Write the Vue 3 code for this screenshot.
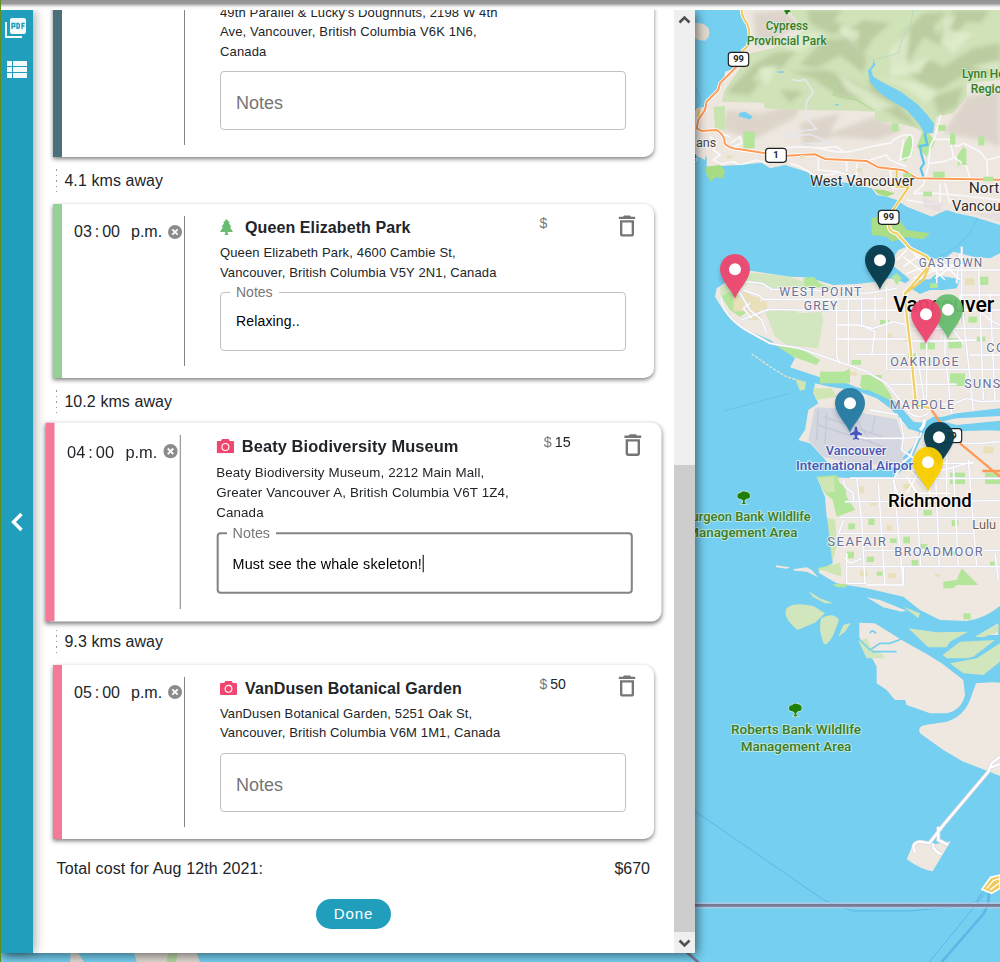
<script setup>
const stops = [
  { color: '#4a707a', time: '', icon: 'cup', title: "49th Parallel & Lucky's Doughnuts", lines: ["49th Parallel & Lucky's Doughnuts, 2198 W 4th", 'Ave, Vancouver, British Columbia V6K 1N6,', 'Canada'], cost: '', note: '', distance: '4.1 kms away' },
  { color: '#95d097', time: '03', icon: 'tree', title: 'Queen Elizabeth Park', lines: ['Queen Elizabeth Park, 4600 Cambie St,', 'Vancouver, British Columbia V5Y 2N1, Canada'], cost: '', note: 'Relaxing..', distance: '10.2 kms away' },
  { color: '#f57998', time: '04', icon: 'camera', title: 'Beaty Biodiversity Museum', lines: ['Beaty Biodiversity Museum, 2212 Main Mall,', 'Greater Vancouver A, British Columbia V6T 1Z4,', 'Canada'], cost: '15', note: 'Must see the whale skeleton!', active: true, distance: '9.3 kms away' },
  { color: '#f57998', time: '05', icon: 'camera', title: 'VanDusen Botanical Garden', lines: ['VanDusen Botanical Garden, 5251 Oak St,', 'Vancouver, British Columbia V6M 1M1, Canada'], cost: '50', note: '' },
]

// Map units are a third of a pixel, with x = 0 at 690px.
const pins = [
  { x: 90, y: 762, c: '#ef476f' },
  { x: 525, y: 735, c: '#073b4c' },
  { x: 729, y: 883, c: '#69bd70' },
  { x: 663, y: 897, c: '#ef476f' },
  { x: 435, y: 1164, c: '#267ba3' },
  { x: 702, y: 1266, c: '#073b4c' },
  { x: 669, y: 1341, c: '#fbd000' },
]
const labels = [
  { t: 'Cypress', x: 227, y: 90, w: 127, k: 'park' },
  { t: 'Provincial Park', x: 170, y: 135, w: 240, k: 'park' },
  { t: 'Lynn Headwaters', x: 816, y: 233, w: 275, k: 'park' },
  { t: 'Regional Park', x: 842, y: 278, w: 225, k: 'park' },
  { t: 'Sturgeon Bank Wildlife', x: -32, y: 1563, w: 394, k: 'park' },
  { t: 'Management Area', x: -8, y: 1612, w: 330, k: 'park' },
  { t: 'Roberts Bank Wildlife', x: 123, y: 2202, w: 390, k: 'park' },
  { t: 'Management Area', x: 152, y: 2253, w: 332, k: 'park' },
  { t: 'West Vancouver', x: 360, y: 558, w: 313, k: 'town' },
  { t: 'North', x: 836, y: 579, w: 118, k: 'town' },
  { t: 'Vancouver', x: 786, y: 634, w: 205, k: 'town' },
  { t: 'Vancouver', x: 610, y: 935, w: 303, k: 'city' },
  { t: 'Richmond', x: 594, y: 1520, w: 251, k: 'rich' },
  { t: 'Lulu Island', x: 847, y: 1586, w: 184, k: 'isle' },
  { t: 'ans', x: 18, y: 441, w: 61, k: 'small' },
  { t: 'e', x: 2, y: 482, w: 18, k: 'small' },
  { t: 'GASTOWN', x: 686, y: 801, w: 194, k: 'area' },
  { t: 'WEST POINT', x: 268, y: 887, w: 250, k: 'area' },
  { t: 'GREY', x: 341, y: 930, w: 105, k: 'area' },
  { t: 'OAKRIDGE', x: 601, y: 1098, w: 209, k: 'area' },
  { t: 'MARPOLE', x: 599, y: 1226, w: 197, k: 'area' },
  { t: 'SUNSET', x: 823, y: 1164, w: 164, k: 'area' },
  { t: 'COLLINGWOOD', x: 889, y: 1055, w: 310, k: 'area' },
  { t: 'SEAFAIR', x: 412, y: 1638, w: 180, k: 'area' },
  { t: 'BROADMOOR', x: 613, y: 1668, w: 269, k: 'area' },
  { t: 'Vancouver', x: 407, y: 1365, w: 182, k: 'air' },
  { t: 'International Airport', x: 318, y: 1409, w: 366, k: 'air' },
]
const shields = [
  { t: '99', x: 115, y: 157, w: 61 },
  { t: '1', x: 227, y: 445, w: 62 },
  { t: '99', x: 565, y: 631, w: 62 },
  { t: '99', x: 753, y: 1286, w: 62 },
]
const greens = [
  [390, 1115, 90, 35], [515, 1125, 60, 45], [780, 1120, 45, 38], [690, 1028, 45, 20], [775, 1015, 40, 30],
  [570, 960, 28, 14], [655, 1060, 30, 16], [485, 1080, 28, 14], [720, 850, 24, 14], [835, 950, 26, 18],
  [870, 830, 25, 25], [860, 1010, 26, 14], [780, 1418, 45, 34], [885, 1418, 48, 34], [475, 1570, 20, 18],
  [535, 1555, 18, 20], [640, 1610, 20, 20], [700, 1530, 26, 16], [785, 1560, 20, 18], [600, 1615, 20, 14],
  [770, 1650, 26, 14], [690, 1632, 22, 14], [470, 1655, 22, 20], [530, 1670, 22, 16], [665, 1680, 20, 18],
  [820, 1840, 22, 18], [900, 1685, 14, 12], [710, 1425, 20, 18], [560, 1715, 18, 12],
  [160, 395, 34, 50], [605, 370, 20, 24], [730, 515, 34, 18], [780, 400, 16, 34], [815, 455, 14, 40],
  [865, 410, 18, 26], [745, 375, 22, 18], [700, 575, 26, 14], [640, 520, 24, 12], [880, 530, 30, 14],
]
const tans = [
  [130, 890, 80, 44], [195, 905, 36, 24], [585, 1000, 22, 16], [735, 935, 30, 22], [805, 930, 20, 40],
  [505, 1460, 18, 18], [590, 1575, 16, 16], [595, 1720, 22, 14], [510, 1712, 22, 16], [640, 1452, 26, 14],
  [735, 1722, 16, 8], [480, 1115, 20, 12], [110, 465, 16, 10], [330, 465, 14, 10], [500, 505, 16, 10],
  [825, 835, 28, 20], [640, 1012, 20, 12], [880, 1340, 30, 20], [540, 1502, 22, 14],
]
</script>

<template>
  <div class="page">
    <svg class="map" viewBox="-2070 0 3000 2886">
      <defs>
        <filter id="soft" x="-20%" y="-20%" width="140%" height="140%"><feGaussianBlur stdDeviation="7" /></filter>
        <filter id="pinshade" x="-30%" y="-30%" width="160%" height="160%"><feGaussianBlur stdDeviation="7" /></filter>
        <clipPath id="hills"><path d="M155 30L170 75L182 110L178 140L150 162L140 205L105 270L95 305L220 308L225 325L330 330L500 332L555 335L555 362L625 370L680 385L700 400L728 400L740 350L790 340L830 290L830 250L930 240V30Z" /></clipPath>
        <clipPath id="northland"><path d="M155 30L170 75L182 110L178 140L150 162L135 205L105 215L100 250L65 290L45 320L20 325L0 360V400L50 470L50 500L150 495L215 488L240 505L285 495L350 515L400 545L470 548L545 565L560 585L590 590L620 600L650 620L700 640L725 650L770 630L800 640L850 650L930 675V30Z" /></clipPath>
        <g id="roads">
          <path d="M93 890Q95 940 160 985L240 1030L330 1045L445 1085L520 1110L590 1150L660 1240Q690 1260 715 1240M165 845L215 850L245 868L400 872L530 880L620 865M160 870L205 885L220 898L440 897L580 896M145 870L180 930L215 960L230 1000M155 960L230 930L240 928L440 932L645 930" />
          <path d="M180 910L160 925L185 955M440 880V1070L450 1090M475 900V1090M515 890V975L555 995L545 1065M555 890V960M590 860V1110M440 975H500L550 985L610 965L650 975M440 1017H650M500 1063H650M600 1108H930M600 1153H800M670 985H930M665 1023H760L860 1020M660 930H930M765 1000V1060L785 1240" />
          <path d="M710 1020V1210M680 1060L705 1210M815 740V930M818 930L850 1230M865 790L880 1200M900 880L915 1200M700 810H930M810 760L800 850M810 885H930M840 1065H930M810 885V970M870 935L900 960L930 975M735 1210L780 1215L830 1195L870 1205L930 1203M760 935L790 990L820 1030" />
          <path d="M500 1310L530 1315H640L690 1310L705 1260M540 1230L630 1245L640 1310L635 1350L680 1380L720 1395M685 1310L660 1370L640 1385L610 1440L625 1490M480 1435H930M465 1505H620L930 1502M450 1552H930M450 1600H850M520 1651H930M470 1700H930M530 1755H640V1700M470 1660V1750H530" />
          <path d="M460 1440L465 1460L490 1480L490 1505M500 1435L515 1560L525 1750M565 1450L575 1600L585 1755M612 1440L625 1600L640 1755M680 1500L692 1700M735 1380L748 1700M790 1400L805 1700M835 1380L860 1700M465 1675L480 1690L515 1675M445 1605L460 1560M915 1660L925 1740M670 1390H850M700 1330H870L930 1325M770 1340V1500M650 1410H760L850 1385" />
        </g>
      </defs>
      <rect x="-2070" width="3000" height="2886" fill="#75cff0" />

      <!-- shipping lanes -->
      <g fill="none" stroke="#5fb5e8" stroke-width="3">
        <path d="M15 2434L405 2702L490 2733H660L780 2722L860 2705L875 2680" />
        <path d="M718 2886L860 2712L885 2680M860 2705Q870 2680 885 2672" />
        <path d="M755 2886L880 2742Q897 2715 897 2680" stroke-width="8" />
        <path d="M105 1232L300 1180M750 770Q810 740 845 690L865 650M15 260L32 300L15 330" stroke="#62bde2" stroke-width="2" />
      </g>

      <!-- north shore -->
      <g clip-path="url(#northland)">
        <rect y="0" width="930" height="700" fill="#ede7df" />
        <g filter="url(#soft)" fill="#d9d0c5" opacity=".8">
          <path d="M190 40L280 30L330 75L270 110L200 140Z M110 330L210 340L330 310L320 350L190 420L100 390Z" />
          <path d="M330 370L450 340L420 400L550 350L640 390L560 420L430 410L340 440Z M830 290L930 270V440L870 420L760 400Z" />
        </g>
        <path d="M295 30H930V240L830 250V290L790 340L740 350L728 400L700 400L680 385L625 370L555 362V335L500 332L330 330L225 325L220 308L95 305L105 270L150 205L180 160L250 145L345 90Z" fill="#d0e2b8" />
        <g clip-path="url(#hills)">
          <g filter="url(#soft)" fill="#aebf92" opacity=".62">
            <path d="M350 30H455L430 65L465 75L430 105L360 70Z M470 95L520 60L600 70L545 120L520 165Z M400 120L470 115L530 175L520 220L450 165L380 205L330 195Z" />
            <path d="M250 160L320 150L275 205L215 200L180 250L120 265L190 195Z M300 215L410 210L500 250L590 300L650 350L540 300L450 290L370 235Z" />
            <path d="M530 235L570 255L640 330L690 385L620 355L560 310Z M640 100L700 40L770 35L730 80L760 140L700 110L660 180L600 200Z" />
            <path d="M790 30H900L870 70L830 65L780 125L740 115Z M650 215L720 180L760 200L850 145L930 130V220L820 225L750 270L690 245Z M730 290L820 260L800 320L745 345Z" />
            <path d="M110 280L150 235L210 245L180 285Z M270 270L340 275L300 310Z" />
          </g>
          <g filter="url(#soft)" fill="#e3efd0" opacity=".75">
            <path d="M330 95L400 100L330 155L280 145Z M450 75L510 95L500 125L455 105Z M600 150L660 85L650 200L720 165L690 220L600 230Z M760 60L800 40L780 90L850 100L790 160L755 130Z M560 230L640 260L710 310L740 280L680 250Z M840 200L930 180V220Z M205 210L260 195L230 260Z M440 220L530 270L620 320L560 330L470 270Z" />
          </g>
          <path d="M670 30L660 80L635 120L625 160L550 180L480 125L400 70L385 30" fill="none" stroke="#a9d3c5" stroke-width="3" stroke-dasharray="4 3" />
          <path d="M400 235L440 260L430 285L500 300L550 330" fill="none" stroke="#b4d797" stroke-width="4" />
        </g>
        <path d="M70 320L105 318V390H75Z" fill="#c9e4b0" />
        <path d="M635 480Q640 420 662 405Q675 420 668 460L645 485Z M700 390Q720 400 735 425L710 470L680 440Z M800 470L820 440L830 450L805 500Z" fill="#b3e59b" />
        <path d="M550 178L556 195L543 210L550 230L575 245L635 277L685 315L712 345L733 372L730 398L705 402L685 370L650 330L600 300L565 275L540 245L533 212L548 195Z" fill="#75cff0" />
        <path d="M704 400L712 435L690 438L694 462L702 490L692 505L700 530" fill="none" stroke="#60c4ed" stroke-width="7" />
        <path d="M150 340L165 337L185 350L180 356L148 347Z M262 216H282M435 314H446" fill="#75cff0" stroke="#75cff0" stroke-width="4" />
        <g fill="none" stroke="#f9f9fc" stroke-width="5">
          <path d="M308 238L325 243L345 238L370 275L350 305L345 350L380 387L320 395L280 403L290 410L360 403L430 432L350 430L310 445" stroke="#e6e6ee" />
          <path d="M230 465Q290 430 390 445Q450 465 500 450Q560 435 600 430Q630 400 665 405Q675 430 660 470L630 480L640 420M390 445L440 440L460 455M500 490V535M385 475V510L440 515L540 545M470 480V515M540 480L590 465L600 480L650 500" />
          <path d="M752 345L735 410L720 440L715 500L700 555L670 580M735 418H780L800 440L820 430M820 430L870 455L890 480L893 530M780 420L790 470L830 500L840 535M670 580H740L800 585L930 600M750 550V610L720 612L650 600M765 550L780 610M715 490L760 485L800 470M600 510L610 570" />
          <path d="M60 410L80 430L70 450L90 465L70 480L95 492L130 485L150 495L200 480L230 490M120 430L150 410L155 430L130 440M90 400L120 410M300 490L330 500L380 530L440 520M893 480L930 470M860 540L870 580" />
        </g>
        <path d="M700 595L760 610L750 635L700 620Z M850 640L930 665V640Z" fill="#e1d8df" opacity=".6" />
      </g>
      <path d="M15 70Q45 65 58 90Q62 110 45 122Q25 122 15 115Z" fill="#e0d9ce" />
      <path d="M48 500L90 495L105 512L100 535L75 532L62 545L48 520Z M550 568L580 570L615 580L590 590L565 582Z" fill="#a8dc84" />
      <path d="M15 390L40 392L50 450L45 480L15 465Z" fill="#ede7df" />

      <g fill="none">
        <path d="M155 30Q155 50 172 72Q185 105 172 140L155 155" stroke="#fff" stroke-width="11" />
        <path d="M155 30Q155 50 172 72Q185 105 172 140L155 155" stroke="#f0c85c" stroke-width="6" />
        <path d="M145 195L90 250L85 270L50 305L45 330L25 360L20 385L35 393L80 390Q105 405 104 430Q115 445 150 448L227 460M290 467L375 463L405 477L530 483L565 502L640 511L680 535L930 539" stroke="#fff" stroke-width="11" />
        <path d="M145 195L90 250L85 270L50 305L45 330L25 360L20 385L35 393L80 390Q105 405 104 430Q115 445 150 448L227 460M290 467L375 463L405 477L530 483L565 502L640 511L680 535L930 539" stroke="#ff9a56" stroke-width="6" />
        <path d="M620 510V560H657L608 632" stroke="#fff" stroke-width="11" />
        <path d="M620 510V560H657L608 632M28 325L24 350" stroke="#f0cc62" stroke-width="7" />
      </g>

      <!-- Vancouver -->
      <path d="M80 865L120 840L180 812L300 830L345 832L380 840L430 855L500 852L560 845L600 835L625 840L645 850L660 840L650 830L600 790L625 750L650 740L700 770L760 780L790 755L850 770L900 775L930 760V1232L850 1240L780 1252L730 1250L700 1268L670 1265L640 1230L600 1190L560 1175L500 1162L470 1150L390 1132L300 1102L315 1075L300 1060L240 1020L150 980L100 930L75 890Z" fill="#efe8e0" />
      <path d="M545 655L600 640L625 655L650 690L720 700L700 718L650 712L605 725L590 710L545 705Z" fill="#abdd86" />
      <path d="M90 862L125 845L190 818L300 830L340 845L375 848L385 862L300 870L250 865L180 850L120 875L95 900Z M225 935L290 925L330 940L395 935L400 960L385 1045L290 1035L255 1010Z" fill="#d2e7c0" />
      <path d="M95 890L115 875L140 880L180 930L150 950L120 930Z M340 835L370 830L390 850L425 865L345 860Z M245 1028L300 1040L340 1050L390 1080L380 1095L310 1070ZM400 1115L445 1125L480 1105L475 1150L395 1135Z M515 1125L560 1125L600 1180L610 1205L510 1158Z M605 830L620 820L635 835L620 855Z" fill="#b3e59b" />
      <path d="M160 870L205 900L215 960L180 960L150 900Z" fill="#e9deb8" />
      <path d="M655 860L680 840L720 838L735 825L810 838L800 865L760 870L720 870L690 882Z" fill="#75cff0" />

      <!-- Sea Island and Richmond -->
      <path d="M375 1150L420 1160L500 1172L560 1195L600 1225L640 1265L690 1288L685 1310L665 1345L640 1370L630 1400L500 1412L420 1395L360 1330L325 1320L345 1290L355 1230L385 1210L370 1180Z" fill="#efe8e0" />
      <path d="M375 1222L440 1225L520 1240L620 1258L640 1320L640 1390L500 1395L400 1370L355 1320Z" fill="#d4d6e0" />
      <g fill="none" stroke="#c5c8d6" stroke-width="4"><path d="M385 1230L380 1320M400 1250L575 1310M385 1275L580 1340M410 1240L405 1330M500 1260L545 1330M555 1250L545 1300" /></g>
      <path d="M750 1262L800 1255L930 1248V1262L800 1275Z M700 1300L740 1270L800 1285L930 1292V1818Q880 1858 830 1863L750 1860L690 1830L640 1790L530 1765L470 1755L440 1750L380 1715L428 1690L425 1610L410 1550L405 1490L380 1430L500 1435L610 1435L660 1390Z" fill="#efe8e0" />
      <path d="M380 1430L440 1425L450 1450L465 1460L470 1490L495 1530L440 1550L428 1500L405 1480Z M412 1555L435 1560L440 1640L425 1680Z M380 1705L450 1690L453 1728Z M428 1752H470V1762H440Z M760 1745L800 1740L815 1705L865 1755L800 1755L790 1765H760Z M900 1430H930V1452H885Z" fill="#b3e59b" />
      <path d="M382 1435L432 1430L435 1475L408 1478Z M412 1555L435 1558L440 1640L428 1680Z M380 1708L450 1690L453 1725Z M316 1137L348 1145L345 1168L330 1172Z M370 1165H425L440 1190L378 1200Z" fill="#cfe6b4" />
      <path d="M185 1062L240 1100L285 1128L320 1140" fill="none" stroke="#e3e4d0" stroke-width="4" stroke-dasharray="9 4" />
      <g fill="#b3e59b"><rect v-for="(g, i) in greens" :key="'g' + i" :x="g[0]" :y="g[1]" :width="g[2]" :height="g[3]" /></g>
      <g fill="#e9dfb9"><rect v-for="(g, i) in tans" :key="'t' + i" :x="g[0]" :y="g[1]" :width="g[2]" :height="g[3]" /></g>
      <path d="M720 990L750 985V1020L715 1020Z" fill="#f0d8dd" />

      <use href="#roads" fill="none" stroke="#dedfec" stroke-width="7.5" />
      <use href="#roads" fill="none" stroke="#fff" stroke-width="4" />
      <g fill="none" stroke="#fff" stroke-width="4"><path d="M620 780L650 750M640 800L690 765M650 820L735 790M670 835L770 800M640 770L710 825M670 760L740 815M725 800L765 840M750 780L810 840M735 835L800 790M760 795H820M740 790V850M660 1410L720 1480M650 1430L700 1510M720 1410V1500M670 1480H780M690 1410L650 1480" /></g>

      <path d="M600 1212L640 1232Q680 1285 720 1280L750 1265L800 1280L930 1278V1290L800 1294L745 1278L700 1300L655 1286Z M740 1255L800 1240L930 1225V1242L800 1253L740 1270Z" fill="#75cff0" />
      <path d="M690 1290Q702 1280 704 1260" fill="none" stroke="#fff" stroke-width="9" />
      <g fill="none">
        <path d="M597 675Q595 695 620 700L660 745L710 770L725 788L685 835L645 880L648 930L662 1050L678 1215L725 1225" stroke="#fff" stroke-width="13" />
        <path d="M597 675Q595 695 620 700L660 745L710 770L725 788L685 835L645 880L648 930L662 1050L678 1215L725 1225M725 780L700 840L645 880" stroke="#f1cf64" stroke-width="7" />
        <path d="M725 1230L745 1260L755 1270M810 1330L930 1430M877 1413H930" stroke="#ff9a56" stroke-width="7" />
      </g>

      <!-- Fraser delta -->
      <path d="M508 1868L555 1870L635 1920L715 1965L755 1990L820 2040L825 2085Q815 2130 770 2140H720L650 2115L645 2100L615 2100L590 2070L560 2050L560 2000L548 1978L520 1940L508 1910Z M258 1696L300 1702L290 1706L258 1702Z M308 1708L350 1702L365 1710L385 1732L350 1715L315 1712Z M530 1792L570 1800L650 1832L635 1835L580 1822Z M858 2050L930 2045V2328L885 2310L820 2285L760 2250L690 2200Q680 2178 710 2174L770 2165Q820 2150 840 2100Z M855 1910L925 1870V1905H880Z" fill="#efe8e0" />
      <path d="M290 1825Q310 1805 370 1818L405 1840L375 1868L322 1890Q275 1850 290 1825Z M393 1855Q430 1835 447 1860L430 1905Q405 1950 398 1922Q385 1890 393 1855Z M445 1910L460 1875L482 1869L465 1895Z M355 1773L390 1795L430 1810L405 1810L370 1792Z M655 1885L740 1897L835 1895L780 1925L770 1942H715Z M758 1965L810 1925L915 1920L850 1970L830 1975H770Z M780 1990L860 1975L930 1930V1985L880 2025L820 2020Z M855 1910L925 1872V1895L880 1912Z M505 1922L530 1915L545 1945L560 1955L580 1965L585 1975H530Z M640 1820L690 1840L685 1855Z" fill="#d1e6bd" />
      <path d="M510 1920L540 1950L570 1930H600L640 1915M540 1900Q545 1885 558 1900M545 1955L620 1955M380 1700L385 1720L430 1750" fill="none" stroke="#75cff0" stroke-width="5" />
      <path d="M620 1820L638 1800V1820Z" fill="#75cff0" />
      <path d="M848 2035L930 2042" fill="none" stroke="#75cff0" stroke-width="12" />
      <path d="M650 2578L672 2525L720 2535L782 2524L728 2614Q695 2610 650 2578Z" fill="#efe8e0" />
      <g fill="none">
        <path d="M930 2270L905 2290L895 2315L760 2475L718 2530L690 2525Q660 2530 676 2558M745 2480L745 2520L775 2535M895 2305L930 2292M728 2530Q730 2555 755 2562" stroke="#ddd8e2" stroke-width="12" />
        <path d="M930 2270L905 2290L895 2315L760 2475L718 2530L690 2525Q660 2530 676 2558M745 2480L745 2520L775 2535M895 2305L930 2292M728 2530Q730 2555 755 2562" stroke="#fff" stroke-width="7" />
        <path d="M15 2716H930" stroke="#b9c9e5" stroke-width="20" opacity=".65" />
        <path d="M15 2716H930M-20 2848L40 2900" stroke="#7b7991" stroke-width="8" />
      </g>
      <path d="M876 2668L902 2632L930 2625V2665L905 2680Z" fill="#eec95b" stroke="#fff" stroke-width="5" />
      <path d="M890 2666L910 2642L928 2636M900 2670L928 2648" fill="none" stroke="#fff" stroke-width="4" />
      <path d="M-1857 2850L-1860 2886H-1818L-1835 2860Z M-1670 2850L-1660 2886H-1470L-1485 2845Z" fill="#ded8d0" />
      <path d="M-1560 2850H-1535L-1542 2886H-1572Z" fill="#b5d7a0" />

      <!-- park and airport symbols -->
      <g fill="#1f8008" stroke="#c6e8dc" stroke-width="4" paint-order="stroke">
        <path id="oak" d="M154 1512L159 1508V1501L151 1496Q142 1498 142 1488Q142 1479 151 1479Q157 1471 167 1475Q180 1476 180 1488Q180 1497 170 1496L164 1501V1508L169 1512Z" />
        <use href="#oak" x="155" y="637" />
        <path d="M281 32L290 30H298L302 34L293 38V43H287V38Z" />
      </g>
      <path d="M495 1280H501L503 1294L516 1301V1306L503 1304L501 1312L507 1316V1319L498 1317L489 1319V1316L495 1312L493 1304L480 1306V1301L493 1294Z" fill="#4757c0" stroke="#d9dbe8" stroke-width="3" paint-order="stroke" />

      <text v-for="(l, i) in labels" :key="'l' + i" :x="l.x" :y="l.y" :textLength="l.w" lengthAdjust="spacingAndGlyphs" :class="l.k">{{ l.t }}</text>
      <g v-for="(s, i) in shields" :key="'s' + i">
        <rect :x="s.x" :y="s.y" :width="s.w" height="42" rx="9" fill="#fff" stroke="#1f1f1f" stroke-width="3.5" />
        <text :x="s.x + s.w / 2" :y="s.y + 30" class="shield">{{ s.t }}</text>
      </g>

      <g v-for="(p, i) in pins" :key="'p' + i" :transform="`translate(${p.x} ${p.y})`">
        <path d="M45 135L4 80Q-5 45 15 15L60 20L85 60Z" fill="#29454e" opacity=".3" filter="url(#pinshade)" />
        <path d="M45 135C39 112 0 78 0 45A45 45 0 0 1 90 45C90 78 51 112 45 135Z" :fill="p.c" opacity=".95" />
        <circle cx="45" cy="46" r="18" fill="#fff" />
      </g>
    </svg>

    <div class="topshade"></div>
    <div class="edge"></div>

    <main class="panel">
      <nav class="rail">
        <svg class="pdf" viewBox="0 0 22 22">
          <path d="M1 5V20H17" fill="none" stroke="#f3fafc" stroke-width="1.8" />
          <rect x="5" y="1" width="16" height="16" rx="2" fill="#f3fafc" />
          <path d="M7 12V6.5H9.8V9.5H7M12 6.5V11.3H13.2L14.3 10.5V7.3L13.2 6.5ZM17 12V6.5H19.8M17 9H19.5" fill="none" stroke="#229ebd" stroke-width="1.4" />
        </svg>
        <svg class="rows" viewBox="0 0 20 17"><path d="M0 0H5V5H0ZM6 0H20V5H6ZM0 6H5V11H0ZM6 6H20V11H6ZM0 12H5V17H0ZM6 12H20V17H6Z" fill="#f3fafc" /></svg>
        <svg class="back" viewBox="0 0 14 22"><path d="M11.5 3L3.5 11L11.5 19" fill="none" stroke="#fff" stroke-width="3.4" /></svg>
      </nav>

      <div class="scroll">
        <div class="list">
          <template v-for="(s, i) in stops" :key="i">
            <section class="card" :class="{ active: s.active }" :style="{ borderLeftColor: s.color }">
              <div class="when">
                <template v-if="s.time">
                  <span class="clock">{{ s.time }} : 00</span><span>p.m.</span>
                  <svg class="clear" viewBox="0 0 14 14"><circle cx="7" cy="7" r="7" fill="#8b8b8b" /><path d="M4.3 4.3L9.7 9.7M9.7 4.3L4.3 9.7" stroke="#fff" stroke-width="1.8" /></svg>
                </template>
              </div>
              <div class="info">
                <header>
                  <svg v-if="s.icon === 'tree'" class="tree" viewBox="0 0 13 16"><path d="M6.5 0L10 4H8.7L11.5 8H10L13 13H7.7V14.5L8.7 16H4.3L5.3 14.5V13H0L3 8H1.5L4.3 4H3Z" fill="#69bd70" /></svg>
                  <svg v-else class="camera" viewBox="0 0 17 14"><path d="M1 2H4.2L5.3 0H11.7L12.8 2H16Q17 2 17 3V13Q17 14 16 14H1Q0 14 0 13V3Q0 2 1 2Z" fill="#ef476f" /><circle cx="8.5" cy="7.8" r="3.4" fill="none" stroke="#fff" stroke-width="1.1" /></svg>
                  <h2>{{ s.title }}</h2>
                  <span class="cost"><i>$</i>{{ s.cost }}</span>
                  <svg class="trash" viewBox="0 0 24 24"><path fill="#757575" d="M6 19c0 1.1.9 2 2 2h8c1.1 0 2-.9 2-2V7H6v12zM8 9h8v10H8V9zm7.5-5l-1-1h-5l-1 1H5v2h14V4h-3.5z" /></svg>
                </header>
                <p><span v-for="l in s.lines" :key="l">{{ l }}</span></p>
                <fieldset :class="{ filled: s.note }">
                  <legend v-if="s.note">Notes</legend>
                  <span v-if="s.note" class="value">{{ s.note }}<b v-if="s.active"></b></span>
                  <span v-else class="hint">Notes</span>
                </fieldset>
              </div>
            </section>
            <div v-if="s.distance" class="gap" :class="{ tight: s.active }"><span>{{ s.distance }}</span></div>
          </template>
          <div class="total"><span>Total cost for Aug 12th 2021:</span><b>$670</b></div>
          <button>Done</button>
        </div>
        <div class="bar">
          <svg viewBox="0 0 21 21"><path d="M5.5 12.5L10.5 7.5L15.5 12.5" fill="none" stroke="#505050" stroke-width="2.6" /></svg>
          <div class="thumb"></div>
          <svg viewBox="0 0 21 21"><path d="M5.5 8.5L10.5 13.5L15.5 8.5" fill="none" stroke="#505050" stroke-width="2.6" /></svg>
        </div>
      </div>
    </main>
  </div>
</template>

<style>
body { margin: 0; overflow: hidden; }
</style>

<style scoped>
.page { position: relative; width: 1000px; height: 962px; overflow: hidden; box-sizing: border-box; padding: 10px 0 0 1px; font-family: "Liberation Sans", Arial, sans-serif; color: #212529; }
.map { position: absolute; left: 0; top: 0; width: 1000px; height: 962px; font-family: Roboto, sans-serif; }
.map text { paint-order: stroke; stroke-linejoin: round; stroke: #fff; stroke-opacity: .7; stroke-width: 6px; }
.map .park { font-size: 41px; font-weight: 500; fill: #3b7d23; stroke: #d8efe0; }
.map .town { font-size: 45px; fill: #2c2c2c; }
.map .city { font-size: 64px; font-weight: 500; fill: #000; }
.map .rich { font-size: 56px; font-weight: 500; fill: #000; }
.map .isle { font-size: 40px; fill: #76604f; }
.map .small { font-size: 38px; fill: #474747; }
.map .area { font-size: 39px; fill: #68719a; letter-spacing: 4px; }
.map .air { font-size: 40px; font-weight: 500; fill: #4757b4; }
.map .shield { font-size: 28px; font-weight: 700; text-anchor: middle; fill: #222; stroke: none; }
.topshade { position: absolute; left: 0; top: 0; width: 1000px; height: 10px; background: linear-gradient(#929292 0, #999 35%, #f4f4f4 70%, #fff 100%); }
.edge { position: absolute; left: 0; top: 0; width: 1px; height: 962px; background: #5e8f20; }
.panel { position: relative; display: flex; width: 694px; height: 943px; background: #fff; box-shadow: 2px 2px 10px rgba(0, 0, 0, .55); clip-path: inset(0 -30px -30px 0); }
.rail { position: relative; z-index: 2; display: flex; flex-direction: column; align-items: center; width: 32px; background: #229ebd; box-shadow: 1px 0 12px rgba(0, 0, 0, .4); }
.pdf { width: 22px; height: 22px; margin: 7px 0 0 -2px; }
.rows { width: 20px; height: 17px; margin-top: 22px; }
.back { width: 14px; height: 22px; margin-top: 433px; }
.scroll { flex: 1; display: flex; overflow: hidden; }
.list { flex: 1; padding: 0 20px; }
.card { display: flex; width: 601px; height: 174px; box-sizing: border-box; border-left: 9px solid; border-radius: 0 10px 10px 0; background: #fff; box-shadow: 0 2px 4px rgba(0, 0, 0, .5); padding: 12px 28px 12px 0; }
.card:first-child { margin-top: -46.5px; }
.card:first-child, .card.active { height: 193.5px; }
.card.active { transform: scale(1.025); }
.when { display: flex; align-items: flex-start; width: 123px; box-sizing: border-box; padding: 6px 0 0 12px; border-right: 1px solid #858585; font-size: 16px; line-height: 19px; }
.active .when { padding-top: 7.5px; }
.clock { width: 57px; word-spacing: -1.5px; }
.clear { width: 14px; height: 14px; margin: 2.5px 0 0 6px; }
.active .clear { margin-top: 1px; }
.info { flex: 1; margin-left: 35px; }
.active .info { margin-left: 34.5px; }
header { display: flex; width: 406px; height: 27px; }
.tree { width: 13px; height: 16px; margin: 3px 12px 0 0; }
.camera { width: 17px; height: 14px; margin: 4px 8px 0 0; }
h2 { flex: 1; margin: 0; font-size: 16px; line-height: 23px; letter-spacing: .1px; white-space: nowrap; }
.cost { width: 73px; font-size: 14px; line-height: 15px; }
.cost i { font-style: normal; color: #777; margin-right: 3px; }
.trash { flex: none; width: 28px; height: 28px; margin: -4.5px -14.5px 0 0; }
p { margin: 0 0 10px; font-size: 13px; line-height: 19.5px; letter-spacing: .14px; }
p span { display: block; white-space: nowrap; }
fieldset { display: flex; align-items: center; width: 406px; height: 59px; box-sizing: border-box; margin: 0; padding: 0 15px; border: 1px solid #c0c0c0; border-radius: 4px; }
fieldset.filled { height: 66px; margin-top: -6.8px; }
legend { height: 15px; margin-left: -6px; padding: 0 6px; font-size: 14px; line-height: 15px; color: #777; }
.hint { padding-top: 5px; font-size: 18px; line-height: 20px; color: #757575; }
.value { display: flex; align-items: center; margin-bottom: 8px; font-size: 14px; line-height: 18px; letter-spacing: .15px; color: #000; }
.value b { width: 1px; height: 17px; margin-left: 1px; background: #000; }
.active fieldset { padding: 0 14px; border: 2px solid #858585; }
.active .value { margin-bottom: 5px; }
.gap { display: flex; align-items: center; height: 47px; padding-left: 3px; }
.gap.tight { height: 46px; }
.gap span { padding-left: 8.4px; font-size: 16px; line-height: 23px; letter-spacing: .08px; background: repeating-linear-gradient(#999 0 1.5px, transparent 1.5px 5.5px) 0 0 / 1px 100% no-repeat; }
.total { display: flex; justify-content: space-between; width: 593.5px; margin: 19px 0 0 3.5px; font-size: 16px; line-height: 22px; letter-spacing: .13px; }
.total b { font-weight: 400; letter-spacing: 0; }
button { display: block; width: 75px; height: 30px; margin: 19px 0 0 263px; padding: 0; border: 0; border-radius: 15px; background: #229ebd; color: #fff; font: 15px "Liberation Sans", Arial, sans-serif; letter-spacing: .9px; }
.bar { display: flex; flex-direction: column; width: 21px; background: #efefef; }
.bar svg { flex: none; width: 21px; height: 21px; }
.thumb { height: 467px; margin-top: 434px; background: #cdcdcd; }
</style>
